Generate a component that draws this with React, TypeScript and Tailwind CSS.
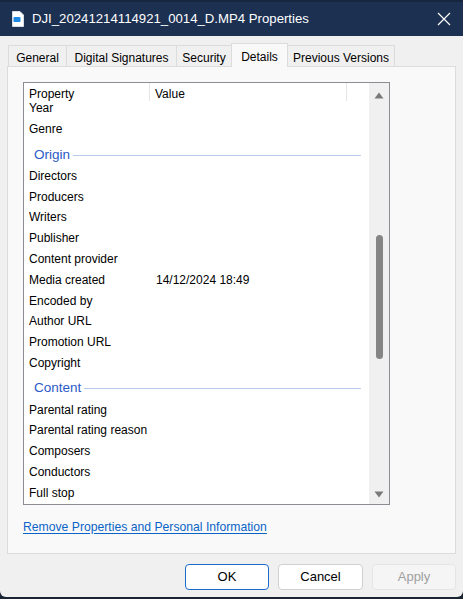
import React from "react";

type Row = { label: string; value?: string; group?: boolean };

const rows: Row[] = [
  { label: "Year" },
  { label: "Genre" },
  { label: "Origin", group: true },
  { label: "Directors" },
  { label: "Producers" },
  { label: "Writers" },
  { label: "Publisher" },
  { label: "Content provider" },
  { label: "Media created", value: "14/12/2024 18:49" },
  { label: "Encoded by" },
  { label: "Author URL" },
  { label: "Promotion URL" },
  { label: "Copyright" },
  { label: "Content", group: true },
  { label: "Parental rating" },
  { label: "Parental rating reason" },
  { label: "Composers" },
  { label: "Conductors" },
  { label: "Full stop" },
];

const tabs = [
  { name: "General", w: "w-[59px]" },
  { name: "Digital Signatures", w: "w-[111px]" },
  { name: "Security", w: "w-[56px]" },
  { name: "Details", w: "w-[57px]" },
  { name: "Previous Versions", w: "w-[108px]" },
];

function FileIcon() {
  return (
    <svg width="14" height="16" viewBox="0 0 14 16">
      <path d="M1.5 0.5h7.5l3.5 3.5v11.5h-11z" fill="#ffffff" stroke="#d6dde8" />
      <rect x="2.5" y="6" width="7" height="5" rx="0.8" fill="#1e88e5" />
    </svg>
  );
}

export default function App() {
  return (
    <div
      className="w-[463px] h-[599px] bg-[#1b2433] overflow-hidden"
      style={{ fontFamily: '"Liberation Sans", Arial, sans-serif' }}
    >
      <div className="h-[597px] flex flex-col bg-[#f0f0f0] rounded-b-[6px] overflow-hidden">
        {/* title bar */}
        <div className="h-[36px] shrink-0 bg-[#1c3052] flex items-center pl-[11px] pr-[12px] border-t-2 border-[#17263f]">
          <FileIcon />
          <span className="ml-[7px] text-white text-[13.2px] leading-none">
            DJI_20241214114921_0014_D.MP4 Properties
          </span>
          <svg className="ml-auto" width="14" height="14" viewBox="0 0 14 14">
            <path d="M1 1L13 13M13 1L1 13" stroke="#ffffff" strokeWidth="1.2" />
          </svg>
        </div>

        {/* body */}
        <div className="flex-1 flex flex-col px-[7px] pt-[7px]">
          {/* tabs */}
          <div className="flex items-end h-[23px] pl-[1px] relative z-10">
            {tabs.map((t, i) => {
              const active = t.name === "Details";
              return active ? (
                <div
                  key={t.name}
                  className={`${t.w} h-[24px] -mb-[1px] -ml-px bg-[#f9f9f9] border border-b-0 border-[#dcdcdc] text-[12px] text-black flex justify-center items-start pt-[4px]`}
                >
                  {t.name}
                </div>
              ) : (
                <div
                  key={t.name}
                  className={`${t.w} h-[21px] bg-[#f0f0f0] border border-b-0 border-[#dcdcdc] ${i === 0 ? "" : "-ml-px"} text-[12px] text-black flex justify-center items-center pt-[3px]`}
                >
                  {t.name}
                </div>
              );
            })}
          </div>

          {/* panel */}
          <div className="h-[488px] bg-[#f9f9f9] border border-[#dcdcdc] flex flex-col pl-[15px] pr-[65px] pt-[15px]">
            <div className="relative h-[423px] bg-white border border-[#8a8d91] flex overflow-hidden">
              <div className="relative flex-1 overflow-hidden">
                {/* column header */}
                <div className="absolute top-0 left-0 right-0 h-[18px] bg-white flex text-[12px] leading-none text-black z-10">
                  <div className="w-[126px] pl-[5px] pt-[5px] border-r border-[#e5e5e5]">Property</div>
                  <div className="w-[197px] pl-[5px] pt-[5px] border-r border-[#e5e5e5]">Value</div>
                </div>
                <div className="flex flex-col pt-[15px]">
                  {rows.map((r) =>
                    r.group ? (
                      <div key={r.label} className="h-[26px] flex items-center pl-[10px] pr-[8px] pt-[4px]">
                        <span className="text-[13.5px] leading-none text-[#2a5ac8]">{r.label}</span>
                        <div className="flex-1 h-px bg-[#b8cbe8] ml-[3px] mt-[1px]" />
                      </div>
                    ) : (
                      <div key={r.label} className="h-[20.78px] flex items-center text-[12px] leading-none text-black">
                        <span className="w-[132px] pl-[5px] whitespace-nowrap">{r.label}</span>
                        {r.value && <span>{r.value}</span>}
                      </div>
                    )
                  )}
                </div>
              </div>

              {/* scrollbar */}
              <div className="w-[20px] bg-[#f0f0f0] flex flex-col items-center">
                <svg className="mt-[9px]" width="10" height="7" viewBox="0 0 10 7">
                  <path d="M5 0.5L9.5 6.5H0.5Z" fill="#7a7a7a" />
                </svg>
                <div className="mt-[136px] w-[7px] h-[124px] rounded-full bg-[#858585]" />
                <svg className="mt-auto mb-[6px]" width="10" height="7" viewBox="0 0 10 7">
                  <path d="M5 6.5L9.5 0.5H0.5Z" fill="#7a7a7a" />
                </svg>
              </div>
            </div>

            <div className="mt-[13px] leading-none">
              <span className="text-[12.2px] text-[#0a64c8] underline underline-offset-2">
                Remove Properties and Personal Information
              </span>
            </div>
          </div>

          {/* buttons */}
          <div className="flex justify-end gap-[9px] mt-[10px]">
            <button className="w-[84px] h-[26px] rounded-[4px] bg-white border border-[#1a6ccc] text-[13px] text-black">
              OK
            </button>
            <button className="w-[85px] h-[26px] rounded-[4px] bg-white border border-[#d0d0d0] text-[13px] text-black">
              Cancel
            </button>
            <button className="w-[84px] h-[26px] rounded-[4px] bg-[#f5f5f5] border border-[#e5e5e5] text-[13px] text-[#a0a0a0]">
              Apply
            </button>
          </div>
        </div>
      </div>
    </div>
  );
}
